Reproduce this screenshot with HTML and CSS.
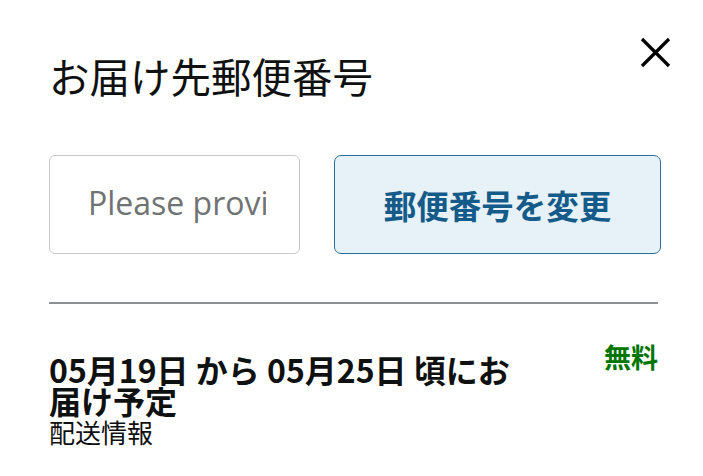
FILE: index.html
```html
<!DOCTYPE html>
<html lang="ja">
<head>
<meta charset="utf-8">
<link rel="stylesheet" href="styles.css">
</head>
<body>
<div class="sheet">
  <div class="header">
    <h1 class="title">お届け先郵便番号</h1>
    <button class="close" aria-label="閉じる">
      <svg width="31" height="31" viewBox="0 0 31 31"><path d="M2 2 L29 29 M29 2 L2 29" stroke="#000" stroke-width="3.2" fill="none"/></svg>
    </button>
  </div>
  <div class="zip-row">
    <div class="zip-input"><span class="placeholder">Please provide a postal code</span></div>
    <button class="zip-btn">郵便番号を変更</button>
  </div>
  <hr class="divider">
  <div class="delivery">
    <div class="delivery-main">
      <div class="delivery-date">05月19日 から 05月25日 頃にお届け予定</div>
      <div class="delivery-info">配送情報</div>
    </div>
    <div class="price">無料</div>
  </div>
</div>
</body>
</html>
```

FILE: styles.css
```css
html, body {
  margin: 0;
  padding: 0;
  background: #fff;
}
body {
  font-family: "Noto Sans CJK JP", "Open Sans", sans-serif;
  color: #0f1111;
}
.sheet {
  padding: 37px 42px 0 49px;
}
.header {
  display: flex;
  justify-content: space-between;
  align-items: flex-start;
}
.title {
  margin: 13px 0 0 0;
  font-size: 40.5px;
  font-weight: 400;
  line-height: 52px;
  color: #0f1111;
}
.close {
  border: 0;
  background: none;
  padding: 0;
  margin-right: -10px;
  width: 31px;
  height: 31px;
  display: block;
}
.zip-row {
  display: flex;
  gap: 34px;
  margin-top: 53px;
}
.zip-input {
  flex: 0 0 251px;
  box-sizing: border-box;
  height: 99px;
  border: 1px solid #c5c9cc;
  border-radius: 6px;
  padding: 0 33px 0 38px;
  display: flex;
  align-items: center;
  overflow: hidden;
}
.placeholder {
  font-family: "Open Sans", sans-serif;
  font-size: 32px;
  line-height: 40px;
  color: #6f7373;
  white-space: nowrap;
  overflow: hidden;
  display: block;
  width: 100%;
  margin-top: -4px;
}
.zip-btn {
  flex: 1;
  box-sizing: border-box;
  height: 99px;
  border: 1.5px solid #2a6f9e;
  border-radius: 7px;
  background: #e6f2f8;
  font-family: "Noto Sans CJK JP", sans-serif;
  font-size: 32.5px;
  font-weight: 700;
  color: #155b8a;
  padding: 0;
}
.divider {
  border: 0;
  border-top: 2px solid #8c8f91;
  margin: 48px 3px 0 0;
}
.delivery {
  display: flex;
  justify-content: space-between;
  align-items: flex-start;
  margin-top: 37px;
}
.delivery-main {
  width: 490px;
}
.delivery-date {
  font-size: 32px;
  font-weight: 700;
  line-height: 31px;
  color: #0f1111;
  margin-top: 13px;
}
.delivery-info {
  font-size: 26px;
  line-height: 32px;
  color: #0f1111;
}
.price {
  font-size: 27px;
  font-weight: 700;
  color: #007600;
  line-height: 32px;
  margin-right: 3px;
}
```
